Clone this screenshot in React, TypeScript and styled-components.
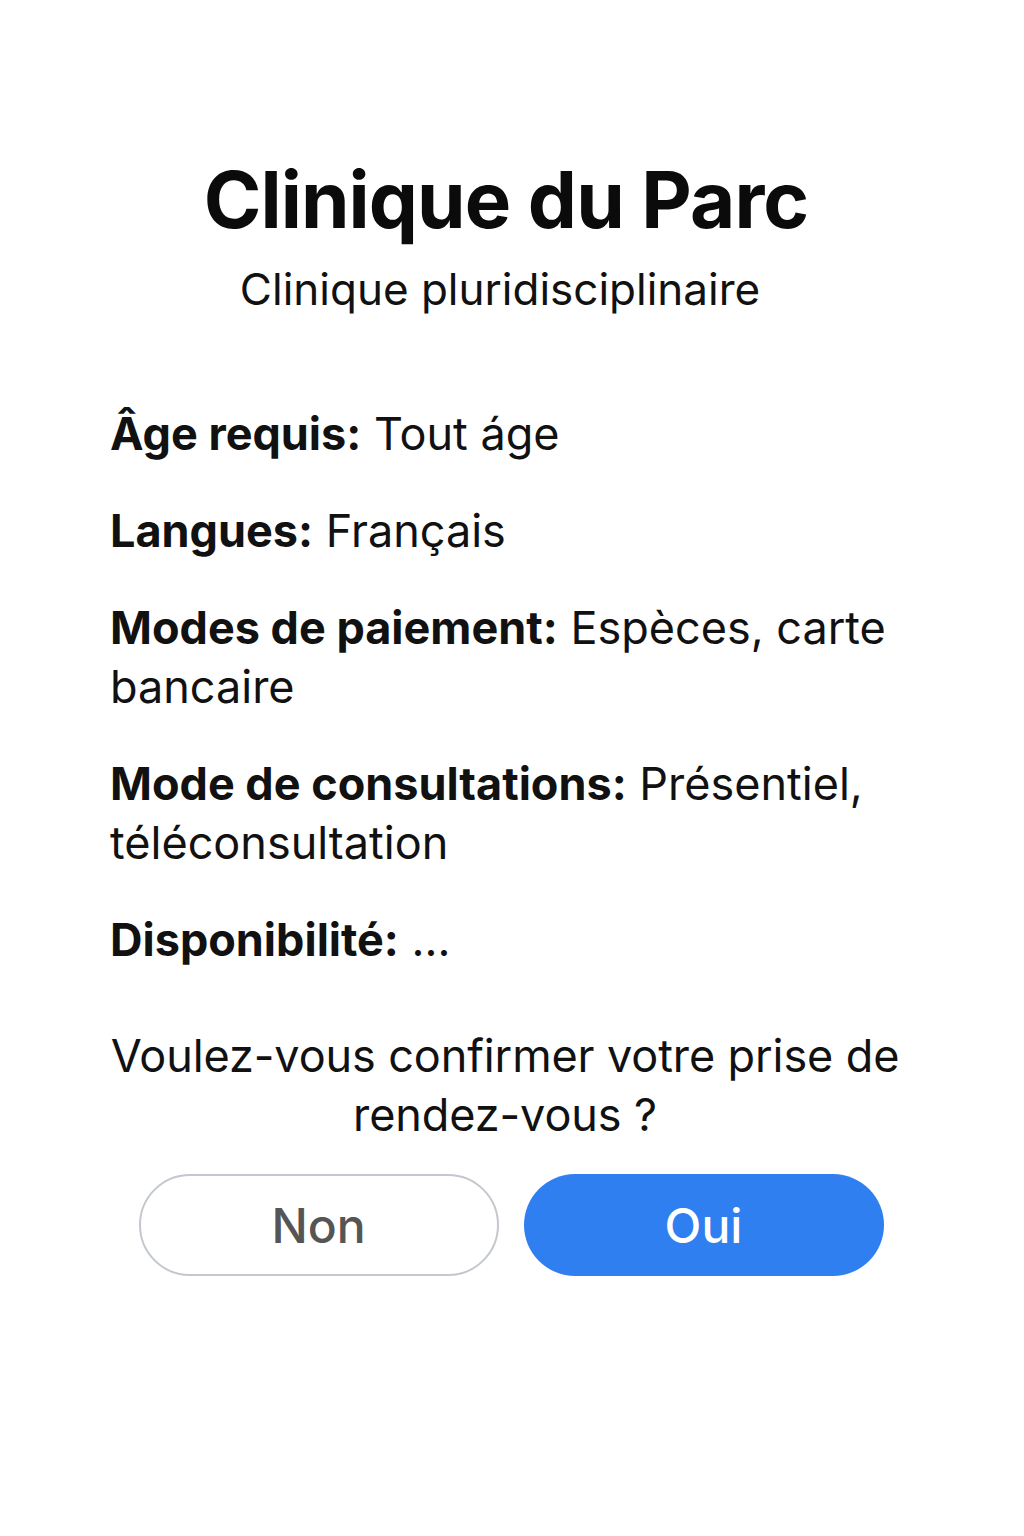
import React from "react";
import styled, { createGlobalStyle } from "styled-components";

const Global = createGlobalStyle`
  html, body { margin: 0; padding: 0; background: #ffffff; }
  body { font-family: Inter, "Liberation Sans", Arial, sans-serif; color: #111; }
`;

const Page = styled.main`
  width: 1024px;
  min-height: 1536px;
  box-sizing: border-box;
  padding: 153px 110px 0 110px;
  display: flex;
  flex-direction: column;
`;

const Header = styled.header`
  display: flex;
  flex-direction: column;
  align-items: center;
  margin-left: -12px;
`;

const Title = styled.h1`
  margin: 0;
  font-size: 78px;
  font-weight: 700;
  line-height: 94px;
  letter-spacing: -0.9px;
  color: #0b0b0b;
`;

const Subtitle = styled.p`
  margin: 16px 0 0 0;
  font-size: 44px;
  font-weight: 400;
  line-height: 52px;
  color: #111;
  transform: translateX(-6px);
`;

const Details = styled.dl`
  margin: 89px 0 0 0;
  display: flex;
  flex-direction: column;
  gap: 38px;
`;

const Row = styled.div`
  font-size: 45px;
  line-height: 59px;
  color: #111;
`;

const Label = styled.dt`
  display: inline;
  font-weight: 700;
`;

const Value = styled.dd`
  display: inline;
  margin: 0;
  font-weight: 400;
`;

const Question = styled.p`
  margin: 57px 0 0 0;
  padding-right: 14px;
  text-align: center;
  font-size: 45px;
  line-height: 59px;
  letter-spacing: -0.1px;
  color: #111;
`;

const Actions = styled.div`
  margin-top: 30px;
  display: flex;
  justify-content: center;
  gap: 25px;
  padding-right: 2px;
`;

const Button = styled.button<{ $primary?: boolean }>`
  width: 360px;
  height: 102px;
  border-radius: 51px;
  font-family: Inter, "Liberation Sans", Arial, sans-serif;
  font-size: 48px;
  font-weight: 500;
  cursor: pointer;
  box-sizing: border-box;
  border: ${(p) => (p.$primary ? "none" : "2px solid #c3c8ce")};
  background: ${(p) => (p.$primary ? "#2f7ff0" : "#ffffff")};
  color: ${(p) => (p.$primary ? "#ffffff" : "#555555")};
`;

const rows: [string, string][] = [
  ["Âge requis:", "Tout áge"],
  ["Langues:", "Français"],
  ["Modes de paiement:", "Espèces, carte bancaire"],
  ["Mode de consultations:", "Présentiel, téléconsultation"],
  ["Disponibilité:", "..."],
];

export default function App() {
  return (
    <>
      <Global />
      <Page>
        <Header>
          <Title>Clinique du Parc</Title>
          <Subtitle>Clinique pluridisciplinaire</Subtitle>
        </Header>
        <Details>
          {rows.map(([l, v]) => (
            <Row key={l}>
              <Label>{l}</Label> <Value>{v}</Value>
            </Row>
          ))}
        </Details>
        <Question>Voulez-vous confirmer votre prise de rendez-vous ?</Question>
        <Actions>
          <Button>Non</Button>
          <Button $primary>Oui</Button>
        </Actions>
      </Page>
    </>
  );
}
